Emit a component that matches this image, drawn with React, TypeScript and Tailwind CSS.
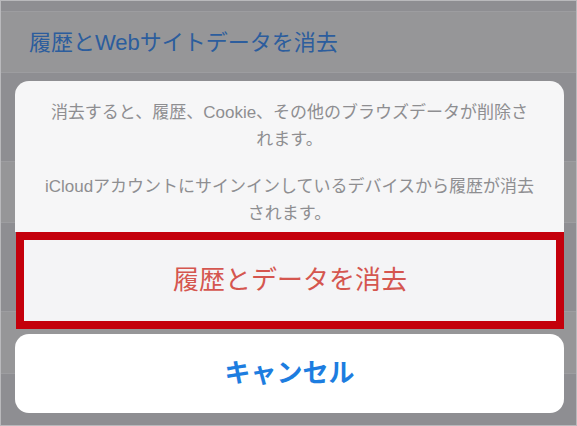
export default function App() {
  const font = { fontFamily: '"Liberation Sans", "Noto Sans CJK JP", sans-serif' };

  return (
    <div
      className="relative w-[577px] h-[426px] overflow-hidden bg-[#8e8e92] border border-[#b9b9bc]"
      style={font}
    >
      {/* dimmed settings list behind the sheet */}
      <div className="flex flex-col">
        <div className="h-[10px]" />
        <div className="h-[62px] flex items-center pl-[28px] bg-[#969698] border-y border-[#9d9da0]">
          <span className="text-[22px] text-[#2c5d9d]">履歴とWebサイトデータを消去</span>
        </div>
        <div className="h-[88px]" />
        <div className="h-[62px] bg-[#969698] border-y border-[#9d9da0]" />
        <div className="h-[88px]" />
        <div className="h-[63px] bg-[#969698] border-y border-[#9d9da0]" />
      </div>

      {/* action sheet */}
      <div className="absolute left-[14px] top-[80px] w-[549px] flex flex-col">
        <div className="rounded-t-[14px] bg-[#f6f6f7] h-[151px] pt-[18px] text-center text-[17px] leading-[27px] text-[#8e8e91]">
          <p>
            消去すると、履歴、Cookie、その他のブラウズデータが削除さ
            <br />
            れます。
          </p>
          <p className="mt-[20px]">
            iCloudアカウントにサインインしているデバイスから履歴が消去
            <br />
            されます。
          </p>
        </div>
        <div className="relative h-[97px] ml-[1px] bg-[#f4f4f6] flex items-center justify-center">
          <span className="text-[26px] text-[#d5564f]">履歴とデータを消去</span>
          <div className="absolute inset-0 border-[8px] border-[#c4000c]" />
        </div>
        <div className="mt-[5px] h-[79px] rounded-[14px] bg-white flex items-center justify-center">
          <span className="text-[26px] font-bold text-[#1d7de0]">キャンセル</span>
        </div>
      </div>
    </div>
  );
}
